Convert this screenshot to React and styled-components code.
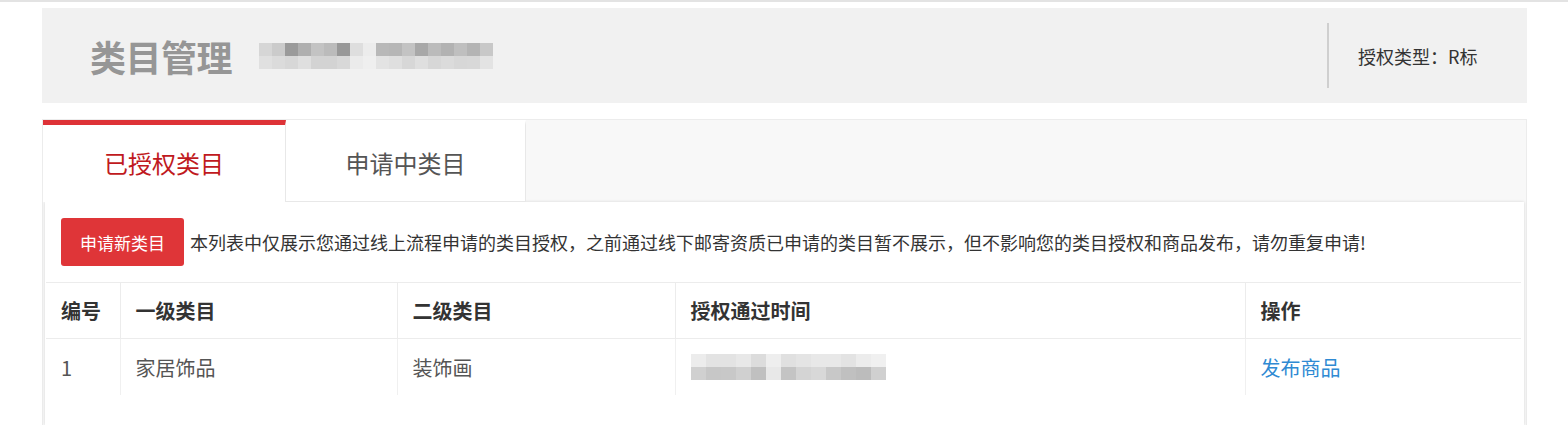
import React from "react";
import styled, { createGlobalStyle } from "styled-components";

const GlobalStyle = createGlobalStyle`
  html, body {
    margin: 0;
    padding: 0;
    background: #fff;
    font-family: "Noto Sans CJK SC", "Liberation Sans", sans-serif;
  }
`;

const TopLine = styled.div`
  height: 2px;
  background: #e3e3e3;
`;

const Page = styled.div`
  padding: 6px 41px 0 42px;
`;

const Header = styled.div`
  height: 95px;
  background: #f1f1f1;
  display: flex;
  align-items: center;
  padding: 0 48px;
  box-sizing: border-box;
`;

const Title = styled.h1`
  margin: 0;
  font-size: 36px;
  line-height: 40px;
  font-weight: 700;
  color: #969696;
  letter-spacing: -0.5px;
`;

const Mosaic = styled.div`
  display: grid;
  grid-template-columns: repeat(${({ cols }) => cols}, ${({ cw }) => cw}px);
  grid-auto-rows: 13px;
  margin-left: ${({ offset }) => offset || 0}px;
`;

const Cell = styled.span`
  background: ${({ shade }) => shade};
`;

const HeaderRight = styled.div`
  margin-left: auto;
  display: flex;
  align-items: center;
  height: 65px;
  border-left: 2px solid #cfcfcf;
  padding-left: 29px;
  font-size: 18px;
  color: #333;
  width: 152px;
  box-sizing: border-box;
  white-space: nowrap;
`;

const Panel = styled.div`
  margin-top: 16px;
  border: 1px solid #ececec;
  border-bottom: none;
  background: #f8f8f8;
`;

const TabBar = styled.div`
  display: flex;
  height: 82px;
`;

const Tab = styled.div`
  width: ${({ w }) => w}px;
  box-sizing: border-box;
  display: flex;
  align-items: center;
  justify-content: center;
  font-size: 24px;
  background: #fff;
  color: ${({ active }) => (active ? "#c01920" : "#555")};
  border-top: 5px solid ${({ active }) => (active ? "#de3237" : "#fff")};
  border-right: 1px solid #e8e8e8;
  border-bottom: ${({ active }) => (active ? "none" : "1px solid #e8e8e8")};
  padding-bottom: 2px;
`;

const Content = styled.div`
  background: #fff;
  margin: 0 2px;
  box-shadow: 0 0 3px rgba(0, 0, 0, 0.14);
  padding: 0 1px 30px 1px;
`;

const Notice = styled.div`
  display: flex;
  align-items: center;
  gap: 6px;
  padding: 16px 15px;
  font-size: 18px;
  color: #333;
  white-space: nowrap;
`;

const Button = styled.button`
  width: 123px;
  height: 48px;
  border: none;
  border-radius: 3px;
  background: #df3538;
  color: #fff;
  font-family: inherit;
  font-size: 17px;
  padding: 0;
`;

const Table = styled.table`
  width: 1475px;
  border-collapse: collapse;
  table-layout: fixed;
`;

const Th = styled.th`
  height: 55px;
  text-align: left;
  padding: 0 15px;
  font-size: 20px;
  font-weight: 700;
  color: #333;
  border-top: 1px solid #ececec;
  border-bottom: 1px solid #ececec;
  border-left: ${({ first }) => (first ? "none" : "1px solid #ececec")};
`;

const Td = styled.td`
  height: 56px;
  padding: 0 15px;
  font-size: 20px;
  color: ${({ link }) => (link ? "#2f8ad3" : "#555")};
  border-left: ${({ first }) => (first ? "none" : "1px solid #f0f0f0")};
`;

const titleShades = [
  ["#d6d6d6", "#cbcbcb", "#9a9a9a", "#afafaf", "#c3c3c3", "#bbbbbb", "#989898", "#dedede", "#ececec", "#b8b8b8", "#b6b6b6", "#c3c3c3", "#a8a8a8", "#bbbbbb", "#b2b2b2", "#bfbfbf", "#b4b4b4", "#c8c8c8"],
  ["#e0e0e0", "#dbdbdb", "#d7d7d7", "#dfdfdf", "#d3d3d3", "#d3d3d3", "#d8d8d8", "#ebebeb", "#efefef", "#e3e3e3", "#dfdfdf", "#d7d7d7", "#dfdfdf", "#d7d7d7", "#dbdbdb", "#d7d7d7", "#d8d8d8", "#e3e3e3"],
];

const timeShades = [
  ["#ececec", "#e3e3e3", "#e3e3e3", "#e8e8e8", "#dcdcdc", "#eeeeee", "#e0e0e0", "#e4e4e4", "#e8e8e8", "#e8e8e8", "#e3e3e3", "#ececec", "#f0f0f0"],
  ["#d0d0d0", "#c7c7c7", "#c8c8c8", "#d0d0d0", "#c0c0c0", "#e8e8e8", "#c4c4c4", "#d4d4d4", "#d8d8d8", "#c8c8c8", "#c0c0c0", "#bcbcbc", "#d0d0d0"],
];

const Blur = ({ rows, offset, cw = 13 }) => (
  <Mosaic cols={rows[0].length} cw={cw} offset={offset}>
    {rows.flat().map((s, i) => (
      <Cell key={i} shade={s} />
    ))}
  </Mosaic>
);

const columns = [74, 277, 278, 570, 276];

const App = () => {
  return (
    <>
      <GlobalStyle />
      <TopLine />
      <Page>
        <Header>
          <Title>类目管理</Title>
          <Blur rows={titleShades} offset={27} />
          <HeaderRight>授权类型：R标</HeaderRight>
        </Header>
        <Panel>
          <TabBar>
            <Tab w={243} active>
              已授权类目
            </Tab>
            <Tab w={240}>申请中类目</Tab>
          </TabBar>
          <Content>
            <Notice>
              <Button>申请新类目</Button>
              本列表中仅展示您通过线上流程申请的类目授权，之前通过线下邮寄资质已申请的类目暂不展示，但不影响您的类目授权和商品发布，请勿重复申请!
            </Notice>
            <Table>
              <colgroup>
                {columns.map((w, i) => (
                  <col key={i} style={{ width: w }} />
                ))}
              </colgroup>
              <thead>
                <tr>
                  <Th first>编号</Th>
                  <Th>一级类目</Th>
                  <Th>二级类目</Th>
                  <Th>授权通过时间</Th>
                  <Th>操作</Th>
                </tr>
              </thead>
              <tbody>
                <tr>
                  <Td first>1</Td>
                  <Td>家居饰品</Td>
                  <Td>装饰画</Td>
                  <Td>
                    <Blur rows={timeShades} cw={15} />
                  </Td>
                  <Td link>发布商品</Td>
                </tr>
              </tbody>
            </Table>
          </Content>
        </Panel>
      </Page>
    </>
  );
};

export default App;
